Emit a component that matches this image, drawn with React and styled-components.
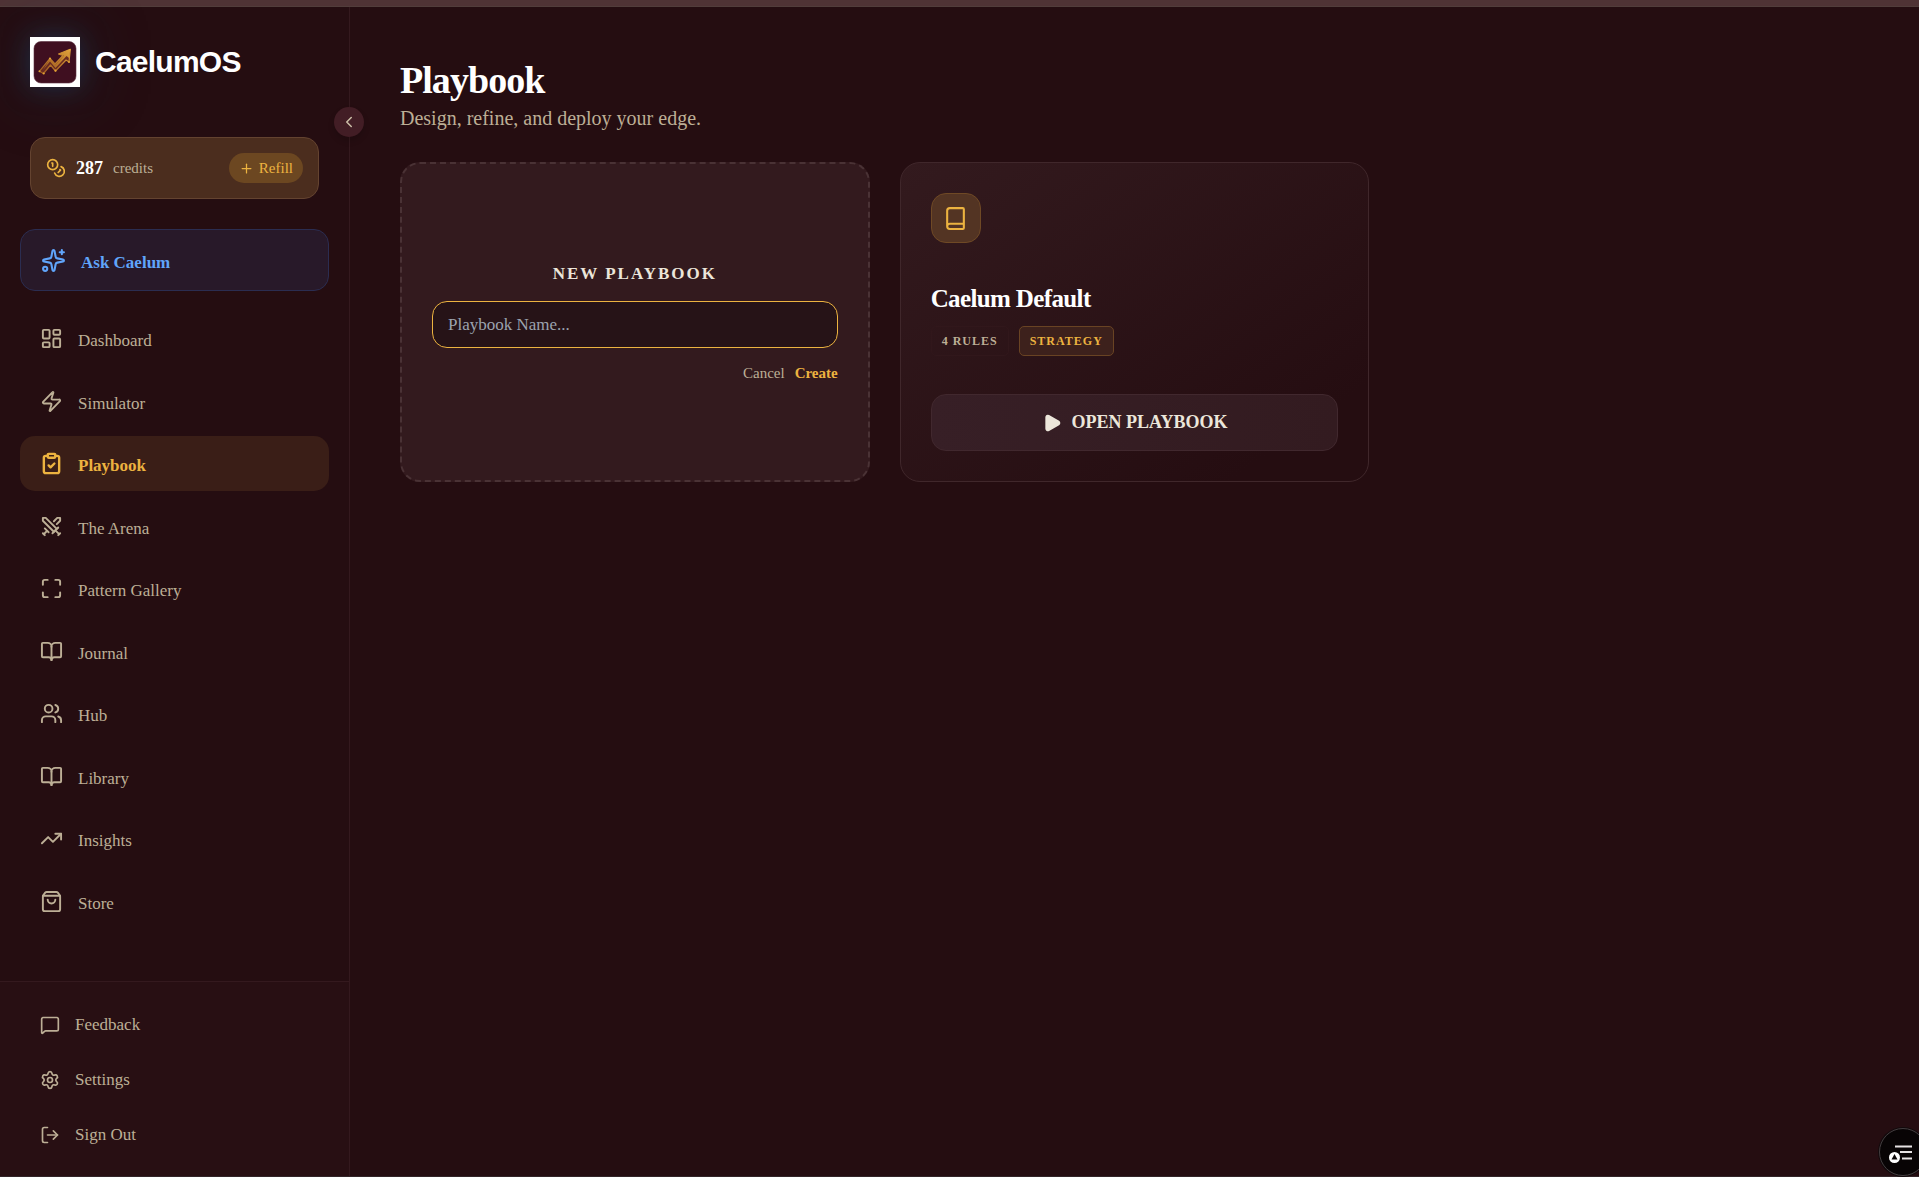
import React from "react";
import styled, { createGlobalStyle } from "styled-components";
import {
  Book,
  BookOpen,
  ChevronLeft,
  ClipboardCheck,
  Coins,
  LayoutDashboard,
  LogOut,
  Maximize,
  MessageSquare,
  Play,
  Plus,
  Settings,
  ShoppingBag,
  Sparkles,
  Swords,
  TrendingUp,
  Users,
  Zap,
} from "lucide-react";

const color = {
  page: "#250d11",
  line: "#34191e",
  gold: "#ecb340",
  sand: "#bdaf96",
  cream: "#ece6da",
  blue: "#60a5fa",
};

const serif = `"Liberation Serif", "Times New Roman", serif`;
const sans = `"Liberation Sans", Arial, sans-serif`;

const GlobalStyle = createGlobalStyle`
  *, *::before, *::after { box-sizing: border-box; }
  body {
    margin: 0;
    background: ${color.page};
    color: ${color.sand};
    font-family: ${serif};
    font-size: 17px;
  }
  h1, h2, h3, p { margin: 0; }
  button, input { font: inherit; }
  button { cursor: pointer; }
  a { color: inherit; text-decoration: none; }
  svg { flex-shrink: 0; }
`;

const Page = styled.div`
  display: flex;
  flex-direction: column;
  min-height: 100vh;
  overflow: hidden;
  border-bottom: 1px solid #332529;
`;

const TopStrip = styled.div`
  height: 7px;
  background: #4f3335;
  border-bottom: 1px solid #513d3b;
`;

const Shell = styled.div`
  display: flex;
  flex: 1;
`;

const Sidebar = styled.aside`
  position: relative;
  display: flex;
  flex-direction: column;
  flex: 0 0 350px;
  border-right: 1px solid ${color.line};
`;

const Brand = styled.a`
  display: flex;
  align-items: center;
  gap: 15px;
  padding: 30px 30px 50px;
`;

const LogoFrame = styled.span`
  display: flex;
  width: 50px;
  height: 50px;
  background: #fff;
  box-shadow: 0 0 25px rgba(30, 70, 105, 0.5), 0 0 70px rgba(30, 70, 105, 0.4);
`;

const BrandName = styled.span`
  font-family: ${sans};
  font-size: 30px;
  font-weight: 700;
  line-height: 40px;
  letter-spacing: -0.025em;
  color: #fff;
`;

const CollapseButton = styled.button`
  position: absolute;
  top: 100px;
  right: -15px;
  display: grid;
  place-items: center;
  width: 30px;
  height: 30px;
  padding: 0;
  border: 0;
  border-radius: 50%;
  background: #421d25;
  color: #cdbfa8;
  box-shadow: 0 4px 6px rgba(0, 0, 0, 0.15);
`;

const Credits = styled.section`
  display: flex;
  align-items: center;
  gap: 10px;
  height: 62px;
  margin: 0 30px 30px;
  padding: 0 15px;
  border: 1px solid #644330;
  border-radius: 15px;
  background: #4b2d1e;
  color: ${color.gold};
`;

const CreditCount = styled.strong`
  font-size: 18px;
  line-height: 25px;
  color: #fff;
`;

const CreditLabel = styled.span`
  font-size: 15px;
  line-height: 20px;
  color: ${color.sand};
`;

const RefillButton = styled.button`
  display: flex;
  align-items: center;
  gap: 5px;
  height: 30px;
  margin-left: auto;
  padding: 0 10px;
  border: 0;
  border-radius: 15px;
  background: #6c4721;
  color: ${color.gold};
  font-size: 15px;
`;

const AskLink = styled.a`
  display: flex;
  align-items: center;
  gap: 15px;
  height: 62px;
  margin: 0 20px 20px;
  padding: 0 20px;
  border: 1px solid #2b2d51;
  border-radius: 15px;
  background: #281929;
  color: ${color.blue};
  font-weight: 700;
`;

const Nav = styled.nav`
  display: flex;
  flex: 1;
  flex-direction: column;
  justify-content: space-between;
  gap: 7px;
  padding: 0 20px 52px;
`;

const NavLink = styled.a`
  display: flex;
  align-items: center;
  gap: 15px;
  height: 55px;
  padding: 0 20px;
  border-radius: 15px;
  background: ${(p) => (p.$active ? "#3a1e17" : "transparent")};
  color: ${(p) => (p.$active ? color.gold : color.sand)};
  font-weight: ${(p) => (p.$active ? 700 : 400)};
`;

const NavLabel = styled.span`
  padding-top: 4px;
  line-height: 25px;
`;

const SidebarFooter = styled.footer`
  display: flex;
  flex-direction: column;
  gap: 10px;
  padding: 20px 20px 19px;
  border-top: 1px solid ${color.line};
  background: #280f13;
`;

const FooterButton = styled.button`
  display: flex;
  align-items: center;
  gap: 15px;
  height: 45px;
  padding: 0 20px;
  border: 0;
  background: none;
  color: ${color.sand};
`;

const Main = styled.main`
  flex: 1;
  min-width: 0;
  padding: 50px;
`;

const PageTitle = styled.h1`
  font-size: 38px;
  line-height: 46px;
  letter-spacing: -0.025em;
  color: #fff;
`;

const Subtitle = styled.p`
  font-size: 20px;
  line-height: 30px;
  color: ${color.sand};
`;

const CardGrid = styled.div`
  display: grid;
  grid-template-columns: repeat(3, minmax(0, 1fr));
  gap: 30px;
  margin-top: 29px;
`;

const NewCard = styled.form`
  display: flex;
  flex-direction: column;
  justify-content: center;
  gap: 15px;
  min-height: 320px;
  padding: 30px;
  border: 2px dashed #4a3235;
  border-radius: 20px;
  background: #331a1e;
`;

const NewLabel = styled.label`
  font-weight: 700;
  line-height: 25px;
  letter-spacing: 2px;
  text-align: center;
  text-transform: uppercase;
  color: ${color.cream};
`;

const NameInput = styled.input`
  width: 100%;
  height: 47px;
  padding: 0 15px;
  border: 1px solid ${color.gold};
  border-radius: 15px;
  outline: none;
  background: #261317;
  color: #fff;
  &::placeholder {
    color: #9ca3af;
    opacity: 1;
  }
`;

const FormActions = styled.div`
  display: flex;
  justify-content: flex-end;
  gap: 10px;
`;

const TextButton = styled.button`
  padding: 0;
  border: 0;
  background: none;
  font-size: 15px;
  line-height: 20px;
  font-weight: ${(p) => (p.$primary ? 700 : 400)};
  color: ${(p) => (p.$primary ? color.gold : color.sand)};
`;

const PlaybookCard = styled.article`
  display: flex;
  flex-direction: column;
  justify-content: space-between;
  min-height: 320px;
  padding: 30px;
  border: 1px solid #40272b;
  border-radius: 20px;
  background: linear-gradient(145deg, #331a1e, #250d11 85%);
`;

const IconTile = styled.span`
  display: grid;
  place-items: center;
  width: 50px;
  height: 50px;
  border: 1px solid #6f4925;
  border-radius: 15px;
  background: #533423;
  color: ${color.gold};
`;

const CardTitle = styled.h2`
  font-size: 25px;
  line-height: 35px;
  letter-spacing: -0.025em;
  color: #fff;
`;

const Tags = styled.div`
  display: flex;
  gap: 10px;
  margin-top: 10px;
`;

const Tag = styled.span`
  height: 30px;
  padding: 0 10px;
  border: 1px solid ${(p) => (p.$gold ? "#694323" : "#31171b")};
  border-radius: 5px;
  background: ${(p) => (p.$gold ? "#3d211c" : "transparent")};
  color: ${(p) => (p.$gold ? color.gold : color.sand)};
  font-size: 12px;
  font-weight: 700;
  line-height: 28px;
  letter-spacing: 1px;
  text-transform: uppercase;
`;

const OpenButton = styled.button`
  display: flex;
  align-items: center;
  justify-content: center;
  gap: 10px;
  height: 57px;
  border: 1px solid #41282e;
  border-radius: 15px;
  background: linear-gradient(90deg, #371f26, #331b20);
  color: ${color.cream};
  font-size: 18px;
  font-weight: 700;
  text-transform: uppercase;
`;

const OutlineWidget = styled.button`
  position: fixed;
  right: -8px;
  bottom: 1px;
  display: flex;
  width: 48px;
  height: 48px;
  padding: 0;
  border: 1px solid #433d3f;
  border-radius: 50%;
  background: #080405;
  box-shadow: 0 0 0 1px #120a0c;
`;

const navItems = [
  ["Dashboard", LayoutDashboard],
  ["Simulator", Zap],
  ["Playbook", ClipboardCheck],
  ["The Arena", Swords],
  ["Pattern Gallery", Maximize],
  ["Journal", BookOpen],
  ["Hub", Users],
  ["Library", BookOpen],
  ["Insights", TrendingUp],
  ["Store", ShoppingBag],
];

const footerItems = [
  ["Feedback", MessageSquare],
  ["Settings", Settings],
  ["Sign Out", LogOut],
];

function Logo() {
  return (
    <svg width="50" height="50" viewBox="0 0 50 50" aria-hidden="true">
      <defs>
        <linearGradient id="arrowGold" x1="0" y1="1" x2="1" y2="0">
          <stop offset="0" stopColor="#9c5a20" />
          <stop offset="0.5" stopColor="#bd7a2a" />
          <stop offset="1" stopColor="#e0a33c" />
        </linearGradient>
      </defs>
      <rect x="4" y="4.5" width="42" height="41.5" rx="7" fill="#3f0f20" stroke="#5b3140" strokeWidth="0.6" />
      <path
        d="M9.300 34.300 20 21.500l5 5.500 8-8.500-4.500-1.500L40.300 12.300 39 25l-3-2-10.500 11-5-6-7 8.500z"
        fill="#6a2a20"
        stroke="url(#arrowGold)"
        strokeWidth="1.200"
        strokeLinejoin="round"
      />
      <path d="M28.500 17 40.300 12.300 39 21l-2.500-2L25.500 31 20 24.500 13 33l7-11.500 5.500 6L34 18.500z" fill="url(#arrowGold)" />
      <g fill="#e0a036">
        <circle cx="9.500" cy="34.300" r="1" />
        <circle cx="13.700" cy="36.500" r="1.100" />
        <circle cx="25.500" cy="33.700" r="1.100" />
        <circle cx="39" cy="25" r="1.100" />
        <circle cx="20" cy="21.500" r="1.100" />
      </g>
    </svg>
  );
}

function OutlineGlyph() {
  return (
    <svg width="46" height="46" viewBox="0 0 46 46" aria-hidden="true">
      <g fill="#e6e2e3">
        <rect x="15" y="16.500" width="17" height="2" />
        <rect x="20" y="22" width="12" height="2" />
        <rect x="22" y="28.500" width="10" height="2" />
      </g>
      <circle cx="14.500" cy="28.500" r="5.500" fill="#fff" />
      <path d="M14.500 25 17.500 30.500h-6z" fill="#080405" />
    </svg>
  );
}

export default function App() {
  return (
    <>
      <GlobalStyle />
      <Page>
        <TopStrip />
        <Shell>
          <Sidebar>
            <Brand href="#home">
              <LogoFrame>
                <Logo />
              </LogoFrame>
              <BrandName>CaelumOS</BrandName>
            </Brand>
            <CollapseButton type="button" aria-label="Collapse sidebar">
              <ChevronLeft size={18} />
            </CollapseButton>
            <Credits>
              <Coins size={20} />
              <CreditCount>287</CreditCount>
              <CreditLabel>credits</CreditLabel>
              <RefillButton type="button">
                <Plus size={15} />
                Refill
              </RefillButton>
            </Credits>
            <AskLink href="#ask">
              <Sparkles size={25} />
              <NavLabel>Ask Caelum</NavLabel>
            </AskLink>
            <Nav>
              {navItems.map(([label, Icon]) => (
                <NavLink key={label} href="#section" $active={label === "Playbook"}>
                  <Icon size={23} strokeWidth={label === "Playbook" ? 2.5 : 2} />
                  <NavLabel>{label}</NavLabel>
                </NavLink>
              ))}
            </Nav>
            <SidebarFooter>
              {footerItems.map(([label, Icon]) => (
                <FooterButton key={label} type="button">
                  <Icon size={20} />
                  {label}
                </FooterButton>
              ))}
            </SidebarFooter>
          </Sidebar>
          <Main>
            <PageTitle>Playbook</PageTitle>
            <Subtitle>Design, refine, and deploy your edge.</Subtitle>
            <CardGrid>
              <NewCard onSubmit={(e) => e.preventDefault()}>
                <NewLabel htmlFor="playbook-name">New Playbook</NewLabel>
                <NameInput id="playbook-name" type="text" placeholder="Playbook Name..." />
                <FormActions>
                  <TextButton type="button">Cancel</TextButton>
                  <TextButton type="submit" $primary>
                    Create
                  </TextButton>
                </FormActions>
              </NewCard>
              <PlaybookCard>
                <IconTile>
                  <Book size={25} />
                </IconTile>
                <div>
                  <CardTitle>Caelum Default</CardTitle>
                  <Tags>
                    <Tag>4 Rules</Tag>
                    <Tag $gold>Strategy</Tag>
                  </Tags>
                </div>
                <OpenButton type="button">
                  <Play size={20} fill="currentColor" />
                  Open Playbook
                </OpenButton>
              </PlaybookCard>
            </CardGrid>
          </Main>
        </Shell>
        <OutlineWidget type="button" aria-label="Open outline">
          <OutlineGlyph />
        </OutlineWidget>
      </Page>
    </>
  );
}
